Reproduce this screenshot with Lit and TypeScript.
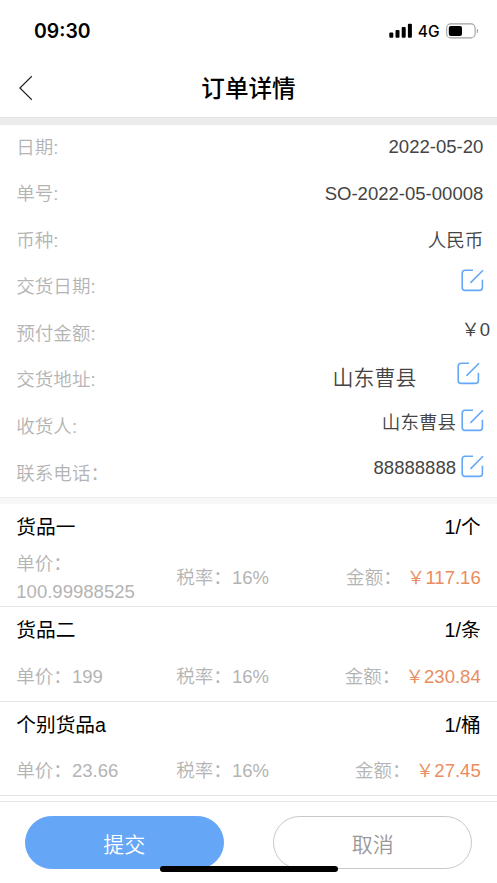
import { LitElement, html, css, svg, nothing } from "lit";
import { customElement, property } from "lit/decorators.js";
import { classMap } from "lit/directives/class-map.js";

interface Field {
  label: string;
  value?: string;
  edit?: boolean;
  kind: string;
}

interface Goods {
  name: string;
  qty: string;
  price: string;
  rate: string;
  amount: string;
}

const fields: Field[] = [
  { label: "日期:", value: "2022-05-20", kind: "plain" },
  { label: "单号:", value: "SO-2022-05-00008", kind: "plain" },
  { label: "币种:", value: "人民币", kind: "plain" },
  { label: "交货日期:", edit: true, kind: "editable" },
  { label: "预付金额:", value: "￥0", kind: "money" },
  { label: "交货地址:", value: "山东曹县", edit: true, kind: "address" },
  { label: "收货人:", value: "山东曹县", edit: true, kind: "editable" },
  { label: "联系电话：", value: "88888888", edit: true, kind: "editable phone" },
];

const goods: Goods[] = [
  { name: "货品一", qty: "1/个", price: "100.99988525", rate: "16%", amount: "￥117.16" },
  { name: "货品二", qty: "1/条", price: "199", rate: "16%", amount: "￥230.84" },
  { name: "个别货品a", qty: "1/桶", price: "23.66", rate: "16%", amount: "￥27.45" },
];

@customElement("status-bar")
export class StatusBar extends LitElement {
  static styles = css`
    :host {
      display: flex;
      justify-content: space-between;
      align-items: center;
      box-sizing: border-box;
      height: 60px;
      padding: 2px 18.5px 0 34px;
      font-family: Inter, "Liberation Sans", sans-serif;
      color: #000;
    }
    .time { font-size: 19.4px; font-weight: 600; }
    .right { display: flex; align-items: center; }
    .net { font-size: 15.5px; font-weight: 500; margin: 0 6px 0 5px; }
    svg { display: block; }
  `;
  render() {
    return html`
      <span class="time">09:30</span>
      <div class="right">
        <svg width="24" height="16" viewBox="0 0 24 16">
          <rect x="0.3" y="9.4" width="4" height="5.3" rx="1" />
          <rect x="6.5" y="7" width="4" height="7.7" rx="1" />
          <rect x="12.7" y="4" width="4" height="10.7" rx="1" />
          <rect x="18.9" y="0.7" width="4" height="14" rx="1" />
        </svg>
        <span class="net">4G</span>
        <svg width="33" height="16" viewBox="0 0 33 16">
          <rect x="0.7" y="0.9" width="28.4" height="14" rx="4" fill="none" stroke="#a0a0a0" stroke-width="1.1" />
          <rect x="2.8" y="3" width="13.2" height="9.9" rx="2" />
          <path d="M30.8 5.4c1.7.7 1.7 4.3 0 5z" fill="#a0a0a0" />
        </svg>
      </div>
    `;
  }
}

@customElement("order-field")
export class OrderField extends LitElement {
  @property({ attribute: false }) field!: Field;
  static styles = css`
    :host {
      display: flex;
      justify-content: space-between;
      height: 46.6px;
      line-height: 46.9px;
      padding-left: 16.3px;
    }
    .label { color: #b4b4b4; font-weight: 350; }
    .value {
      display: flex;
      align-items: center;
      box-sizing: border-box;
      height: 46.6px;
      padding-right: 13.7px;
      color: #444;
      font-weight: 350;
    }
    .money { padding: 0 7px 8px 0; }
    .editable { padding: 0 13px 8px 0; }
    .phone { padding-bottom: 11px; }
    .address { padding: 0 17px 5px 0; font-size: 21px; }
    .icon { display: block; margin-left: 5px; }
    .editable .icon { margin-top: -5.5px; }
    .phone .icon { margin-top: -3px; }
    .address .icon { margin: -9px 0 0 40.5px; }
  `;
  render() {
    const f = this.field;
    const classes: Record<string, boolean> = { value: true };
    for (const k of f.kind.split(" ")) classes[k] = true;
    return html`
      <span class="label">${f.label}</span>
      <div class=${classMap(classes)}>
        ${f.value ? html`<span>${f.value}</span>` : nothing}
        ${f.edit
          ? html`<svg class="icon" width="23" height="23" viewBox="0 0 23 23" fill="none" stroke="#66a8f8" stroke-width="1.6">
              ${svg`<path d="M12 1.2H4.2a3 3 0 0 0-3 3v14.2a3 3 0 0 0 3 3h14.2a3 3 0 0 0 3-3v-7.6M9.4 13.9 22 1.3" />`}
            </svg>`
          : nothing}
      </div>
    `;
  }
}

@customElement("goods-item")
export class GoodsItem extends LitElement {
  @property({ attribute: false }) item!: Goods;
  static styles = css`
    :host { display: block; padding: 0 16.3px; border-bottom: 1px solid #e4e4e4; }
    .head {
      display: flex;
      justify-content: space-between;
      height: 46.6px;
      line-height: 47.4px;
      font-size: 19.7px;
      color: #000;
      font-weight: 400;
    }
    .detail {
      display: grid;
      grid-template-columns: 160px 130px 1fr;
      align-items: center;
      min-height: 46.6px;
      line-height: 28px;
      color: #b4b4b4;
      font-weight: 350;
    }
    .price { padding-right: 20px; overflow-wrap: break-word; }
    .sum { text-align: right; }
    .amount { color: #e98d60; }
  `;
  render() {
    const g = this.item;
    return html`
      <div class="head"><span>${g.name}</span><span>${g.qty}</span></div>
      <div class="detail">
        <span class="price">单价：<wbr />${g.price}</span>
        <span>税率：${g.rate}</span>
        <span class="sum">金额： <span class="amount">${g.amount}</span></span>
      </div>
    `;
  }
}

@customElement("app-root")
export class AppRoot extends LitElement {
  static styles = css`
    :host {
      display: flex;
      flex-direction: column;
      position: relative;
      height: 883px;
      overflow: hidden;
      background: #fff;
      font-family: "Liberation Sans", "Noto Sans CJK SC", sans-serif;
      font-size: 18.55px;
    }
    .nav {
      display: grid;
      grid-template-columns: 60px 1fr 60px;
      align-items: center;
      height: 57px;
    }
    .back { display: block; margin: -1px 0 0 18px; }
    .title {
      text-align: center;
      font-size: 23.6px;
      line-height: 34px;
      font-weight: 500;
      color: #000;
    }
    .band { height: 7.5px; background: #ececec; box-sizing: border-box; border-top: 1px solid #e2e2e2; }
    .split { height: 6.5px; background: #f7f7f7; box-sizing: border-box; border-top: 1px solid #ececec; }
    .actions {
      display: flex;
      justify-content: space-between;
      margin-top: 5px;
      padding: 14.4px 25px 0;
      border-top: 1px solid #e4e4e4;
    }
    .btn {
      box-sizing: border-box;
      width: 198.7px;
      height: 53px;
      border-radius: 27px;
      border: 1px solid #c8c8c8;
      background: #fff;
      color: #999;
      font: inherit;
      font-size: 21px;
      font-weight: 350;
      padding: 0;
    }
    .primary { background: #66a6f6; border-color: #66a6f6; color: #fff; }
    .home {
      position: absolute;
      left: 160px;
      bottom: 11px;
      width: 178px;
      height: 6.5px;
      border-radius: 4px;
      background: #000;
    }
  `;
  render() {
    return html`
      <status-bar></status-bar>
      <div class="nav">
        <svg class="back" width="16" height="26" viewBox="0 0 16 26" fill="none" stroke="#222" stroke-width="1.2">
          <path d="M13.8 1.2 1.9 13l11.9 11.8" />
        </svg>
        <div class="title">订单详情</div>
      </div>
      <div class="band"></div>
      ${fields.map((f) => html`<order-field .field=${f}></order-field>`)}
      <div class="split"></div>
      ${goods.map((g) => html`<goods-item .item=${g}></goods-item>`)}
      <div class="actions">
        <button class="btn primary">提交</button>
        <button class="btn">取消</button>
      </div>
      <div class="home"></div>
    `;
  }
}
